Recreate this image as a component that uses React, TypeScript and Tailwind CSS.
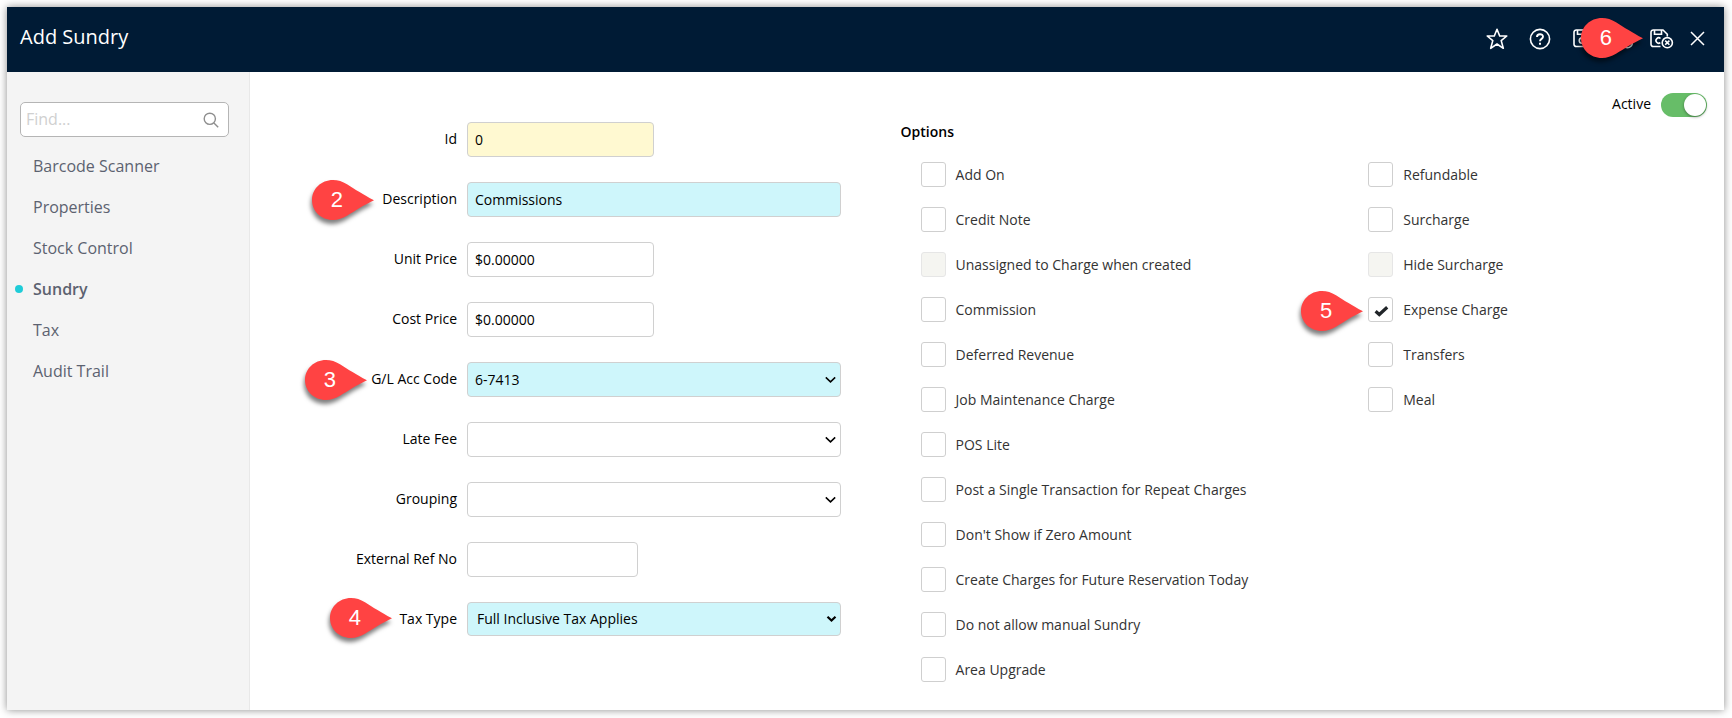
import React, { useState } from 'react';
import clsx from 'clsx';

const navItems = ['Barcode Scanner', 'Properties', 'Stock Control', 'Sundry', 'Tax', 'Audit Trail'];

const leftOptions = [
  'Add On',
  'Credit Note',
  'Unassigned to Charge when created',
  'Commission',
  'Deferred Revenue',
  'Job Maintenance Charge',
  'POS Lite',
  'Post a Single Transaction for Repeat Charges',
  "Don't Show if Zero Amount",
  'Create Charges for Future Reservation Today',
  'Do not allow manual Sundry',
  'Area Upgrade',
];

const rightOptions = ['Refundable', 'Surcharge', 'Hide Surcharge', 'Expense Charge', 'Transfers', 'Meal'];

const disabledOptions = ['Unassigned to Charge when created', 'Hide Surcharge'];

const fieldStyle = 'rounded-[4px] border border-[#d0d0d0] text-sm text-black outline-none';

// Numbered red marker pointing to the right
const Pin = ({ step, className }: { step: number; className: string }) => (
  <span className={clsx('pointer-events-none absolute z-10 h-10 w-[62px]', className)}>
    <svg
      viewBox="0 0 62 40"
      className="absolute inset-0 h-full w-full overflow-visible drop-shadow-[-1px_4px_2px_rgba(0,0,0,0.5)]"
    >
      <path d="M21 0C26 0 30.500 1.500 35 4.200C43.500 9.500 51 14.500 62 20.200C51 25.500 43.500 30.500 35 35.800C30.500 38.500 26 40 21 40C9 40 0 31 0 20S9 0 21 0Z" fill="#ff4343" />
    </svg>
    <span className="relative flex h-full w-4/5 items-center justify-center font-['Liberation_Sans',sans-serif] text-[22px] leading-none text-white">
      {step}
    </span>
  </span>
);

const SaveIcon = ({ badge }: { badge?: 'plus' | 'close' }) => (
  <svg width="24" height="22" viewBox="0 0 24 22" fill="none" stroke="white" strokeWidth="1.6">
    {badge ? (
      <>
        <path d="M10.500 18.500H3.200A2.200 2.200 0 0 1 1 16.300V4.200A2.200 2.200 0 0 1 3.200 2H13L17.300 6.300V8.500" />
        <path d="M4.500 2V6.200H11.500V2" />
        <path d="M10.500 10.500A2.700 2.700 0 1 0 10.300 14.700" />
        <circle cx="17.300" cy="14.700" r="5.100" />
        {badge === 'close' ? <path d="M15.200 12.600L19.400 16.800M19.400 12.600L15.200 16.800" /> : <path d="M17.300 12V17.500M14.500 14.700H20" />}
      </>
    ) : (
      <>
        <path d="M6.200 2H16L20.300 6.300V16.300A2.200 2.200 0 0 1 18.100 18.500H6.200A2.200 2.200 0 0 1 4 16.300V4.200A2.200 2.200 0 0 1 6.200 2Z" />
        <path d="M7.500 2V6.200H14.500V2" />
        <circle cx="12" cy="12.600" r="2.700" />
      </>
    )}
  </svg>
);

const Chevron = ({ bold }: { bold?: boolean }) => (
  <svg
    className={clsx('pointer-events-none absolute top-1/2 -translate-y-1/2', bold ? 'right-1' : 'right-[5px]')}
    width="11"
    height="7"
    viewBox="0 0 11 7"
    fill="none"
    stroke="black"
    strokeWidth={bold ? 2.2 : 1.5}
  >
    <path d={bold ? 'M1.500 1.200L5.500 5L9.500 1.200' : 'M.8 .9L5.500 5.400L10.200 .9'} />
  </svg>
);

const FieldRow = ({
  id,
  label,
  pin,
  children,
}: {
  id: string;
  label: string;
  pin?: React.ReactNode;
  children: React.ReactNode;
}) => (
  <div className="flex h-[35px] items-start gap-[10px]">
    <label htmlFor={id} className="relative w-[207px] shrink-0 text-right text-sm leading-[33px] text-black">
      {label}
      {pin}
    </label>
    {children}
  </div>
);

const SelectField = ({ id, value, filled, bold }: { id: string; value?: string; filled?: boolean; bold?: boolean }) => (
  <div className="relative w-[374px]">
    <select
      id={id}
      className={clsx(
        fieldStyle,
        'block w-full appearance-none',
        filled ? 'bg-[#cef6fb]' : 'bg-white',
        bold ? 'h-[34px] px-[9px]' : 'h-[35px] px-[7px]'
      )}
    >
      <option>{value}</option>
    </select>
    <Chevron bold={bold} />
  </div>
);

const OptionList = ({
  options,
  checked,
  onToggle,
}: {
  options: string[];
  checked: string[];
  onToggle: (name: string) => void;
}) => (
  <div className="flex flex-col gap-5">
    {options.map(name => (
      <label key={name} className="relative flex h-[25px] items-center gap-[10px] text-sm text-[#333]">
        {name === 'Expense Charge' && <Pin step={5} className="-left-[67px] -top-[6px]" />}
        <span className="relative flex size-[25px] shrink-0">
          <input
            type="checkbox"
            checked={checked.includes(name)}
            disabled={disabledOptions.includes(name)}
            onChange={() => onToggle(name)}
            className="size-[25px] appearance-none rounded-[3px] border border-[#cfcfcf] bg-white disabled:border-[#e6e6e6] disabled:bg-[#f5f5f1]"
          />
          {checked.includes(name) && (
            <svg className="pointer-events-none absolute left-[6px] top-[8px]" width="15" height="12" viewBox="0 0 15 12">
              <path d="M1.600 6.200L5.300 9.500L13.200 2.200" fill="none" stroke="#212529" strokeWidth="3.200" />
            </svg>
          )}
        </span>
        {name}
      </label>
    ))}
  </div>
);

const App = () => {
  const [checked, setChecked] = useState<string[]>(['Expense Charge']);
  const [active, setActive] = useState(true);

  const toggleOption = (name: string) => {
    setChecked(prev => (prev.includes(name) ? prev.filter(n => n !== name) : [...prev, name]));
  };

  return (
    <div className="flex min-h-screen bg-white pb-2 pl-[7px] pr-2 pt-[7px] font-['Open_Sans',sans-serif]">
      <div className="flex flex-1 flex-col bg-white shadow-[0_0_8px_rgba(0,0,0,0.45)]">
        {/* Title bar */}
        <header className="flex h-[65px] items-center justify-between bg-[#001b35] pb-[2px] pl-[13px] pr-[18px] text-white">
          <h1 className="pb-1 text-xl">Add Sundry</h1>
          <div className="flex items-center gap-4">
            <button aria-label="Favourite" className="flex w-[26px] justify-center">
              <svg width="22" height="22" viewBox="0 0 22 22" fill="none" stroke="white" strokeWidth="1.600" strokeLinejoin="round">
                <path d="M11 1.300L13.700 8H20.800L15.200 12.600L17.300 20.300L11 16L4.700 20.300L6.800 12.600L1.200 8H8.300Z" />
              </svg>
            </button>
            <button aria-label="Help" className="flex w-7 justify-center">
              <svg width="22" height="22" viewBox="0 0 22 22" fill="none" stroke="white" strokeWidth="1.600">
                <circle cx="11" cy="11" r="9.600" />
                <path d="M8 8.900C8 5.300 14 5.300 14 8.800C14 11 11 10.800 11 13.300" strokeWidth="1.900" />
                <path d="M11 14.800V16.800" strokeWidth="2" />
              </svg>
            </button>
            <button aria-label="Save">
              <SaveIcon />
            </button>
            <button aria-label="Save and new">
              <SaveIcon badge="plus" />
            </button>
            <button aria-label="Save and close" className="relative">
              <SaveIcon badge="close" />
              <Pin step={6} className="-left-[69px] -top-[10px]" />
            </button>
            <button aria-label="Close">
              <svg width="16" height="16" viewBox="0 0 16 16" stroke="white" strokeWidth="1.500">
                <path d="M1 1L14 14M14 1L1 14" />
              </svg>
            </button>
          </div>
        </header>

        <div className="flex flex-1">
          {/* Sidebar */}
          <aside className="w-[243px] shrink-0 border-r border-[#e8e8e8] bg-[#f4f4f4] pt-[30px]">
            <div className="ml-[13px] mr-5 flex h-[35px] items-center rounded-[5px] border border-[#b5b5b5] bg-white pl-[5px] pr-[9px]">
              <input
                type="text"
                aria-label="Find"
                placeholder="Find..."
                className="w-full min-w-0 pb-[2px] text-base outline-none placeholder:text-[#d0d0d0]"
              />
              <svg width="16" height="16" viewBox="0 0 16 16" fill="none" stroke="#8e8e8e" strokeWidth="1.400" className="shrink-0">
                <circle cx="6.800" cy="6.800" r="5.600" />
                <path d="M10.900 10.900L15.200 15.200" />
              </svg>
            </div>
            <nav className="mt-2 pl-2">
              {navItems.map(item => (
                <a
                  key={item}
                  href="#"
                  className={clsx('flex h-[41px] items-center gap-[10px] text-base text-[#5c6270]', item === 'Sundry' && 'font-semibold')}
                >
                  <span className={clsx('size-2 rounded-full', item === 'Sundry' && 'bg-[#1fccd8]')}></span>
                  {item}
                </a>
              ))}
            </nav>
          </aside>

          {/* Form */}
          <main className="flex-1 pt-[21px]">
            <div className="flex h-6 items-center justify-end gap-[10px] pr-[17px]">
              <label htmlFor="active" className="pb-[2px] text-sm text-black">
                Active
              </label>
              <input
                id="active"
                type="checkbox"
                role="switch"
                checked={active}
                onChange={() => setActive(!active)}
                className="flex h-6 w-[46px] appearance-none rounded-full bg-[#c8c8c8] p-px before:size-[22px] before:rounded-full before:bg-white before:shadow-[0_1px_3px_rgba(0,0,0,0.4)] checked:justify-end checked:bg-[#67bd68]"
              />
            </div>

            <div className="flex pt-[5px]">
              <div className="flex w-[44%] flex-col gap-[25px]">
                <FieldRow id="id" label="Id">
                  <input id="id" defaultValue="0" readOnly className={clsx(fieldStyle, 'h-[35px] w-[187px] bg-[#fff9d1] px-[7px]')} />
                </FieldRow>
                <FieldRow id="description" label="Description" pin={<Pin step={2} className="-top-[2px] right-[83px]" />}>
                  <input id="description" defaultValue="Commissions" className={clsx(fieldStyle, 'h-[35px] w-[374px] bg-[#cef6fb] px-[7px]')} />
                </FieldRow>
                <FieldRow id="unit-price" label="Unit Price">
                  <input id="unit-price" defaultValue="$0.00000" className={clsx(fieldStyle, 'h-[35px] w-[187px] bg-white px-[7px]')} />
                </FieldRow>
                <FieldRow id="cost-price" label="Cost Price">
                  <input id="cost-price" defaultValue="$0.00000" className={clsx(fieldStyle, 'h-[35px] w-[187px] bg-white px-[7px]')} />
                </FieldRow>
                <FieldRow id="gl-code" label="G/L Acc Code" pin={<Pin step={3} className="-top-[2px] right-[90px]" />}>
                  <SelectField id="gl-code" value="6-7413" filled />
                </FieldRow>
                <FieldRow id="late-fee" label="Late Fee">
                  <SelectField id="late-fee" />
                </FieldRow>
                <FieldRow id="grouping" label="Grouping">
                  <SelectField id="grouping" />
                </FieldRow>
                <FieldRow id="external-ref" label="External Ref No">
                  <input id="external-ref" className={clsx(fieldStyle, 'h-[35px] w-[171px] bg-white px-[7px]')} />
                </FieldRow>
                <FieldRow id="tax-type" label="Tax Type" pin={<Pin step={4} className="-top-1 right-[65px]" />}>
                  <SelectField id="tax-type" value="Full Inclusive Tax Applies" filled bold />
                </FieldRow>
              </div>

              <section className="flex-1 pl-[2px]">
                <h2 className="text-sm font-semibold text-black">Options</h2>
                <div className="flex pl-5 pr-[18px] pt-5">
                  <div className="w-[57%]">
                    <OptionList options={leftOptions} checked={checked} onToggle={toggleOption} />
                  </div>
                  <div className="flex-1">
                    <OptionList options={rightOptions} checked={checked} onToggle={toggleOption} />
                  </div>
                </div>
              </section>
            </div>
          </main>
        </div>
      </div>
    </div>
  );
};

export default App;
